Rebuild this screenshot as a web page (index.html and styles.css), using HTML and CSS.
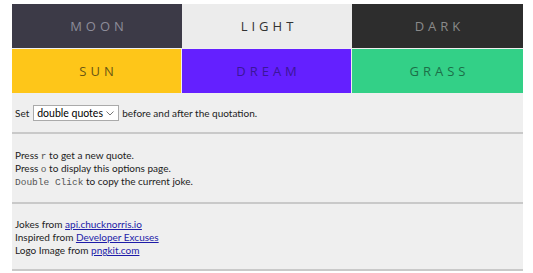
FILE: index.html
```html
<!DOCTYPE html>
<html lang="en">
<head>
  <meta charset="UTF-8" />
  <title>Options</title>
  <link rel="stylesheet" href="styles.css">
</head>
<body>
  <div class="options">
    <!-- theme tiles -->
    <div class="themes">
      <div class="theme moon">MOON</div>
      <div class="theme light">LIGHT</div>
      <div class="theme dark">DARK</div>
      <div class="theme sun">SUN</div>
      <div class="theme dream">DREAM</div>
      <div class="theme grass">GRASS</div>
    </div>

    <div class="section quotes">
      Set
      <span class="select-wrap">
        <select class="quote-select">
          <option>double quotes</option>
          <option>single quotes</option>
          <option>none</option>
        </select>
        <svg class="chevron" width="8" height="5" viewBox="0 0 8 5">
          <path d="M0.5 0.5 L4 4 L7.5 0.5" fill="none" stroke="#666" stroke-width="0.9"/>
        </svg>
      </span>
      before and after the quotation.
    </div>

    <div class="section keys">
      <p>Press <code>r</code> to get a new quote.</p>
      <p>Press <code>o</code> to display this options page.</p>
      <p><code>Double Click</code> to copy the current joke.</p>
    </div>

    <div class="section credits">
      <p>Jokes from <a href="#">api.chucknorris.io</a></p>
      <p>Inspired from <a href="#">Developer Excuses</a></p>
      <p>Logo Image from <a href="#">pngkit.com</a></p>
    </div>
  </div>
</body>
</html>
```
FILE: styles.css
```css
* {
  margin: 0;
  padding: 0;
  box-sizing: border-box;
}

body {
  background: #fff;
  font-family: Lato, "Open Sans", sans-serif;
  font-size: 10px;
  color: #222;
}

.options {
  width: 511px;
  margin: 4px 0 0 12px;
  background: #efefef;
}

/* tiles */
.themes {
  display: grid;
  grid-template-columns: 170px 170px 171px;
  grid-auto-rows: 44px;
  row-gap: 1px;
}

.theme {
  display: flex;
  justify-content: center;
  align-items: center;
  font-family: "Open Sans", sans-serif;
  font-size: 13px;
  letter-spacing: 4px;
  padding-left: 4px;
}

.moon  { background: #3c3a47; color: #8d8c99; }
.light { background: #ececec; color: #333; }
.dark  { background: #2d2d2d; color: #8a8a8a; }
.sun   { background: #fec619; color: #6a5614; margin-right: 1px; }
.dream { background: #6420ff; color: #3b1699; margin-right: 1px; }
.grass { background: #33d087; color: #1c6e48; }

/* sections */
.section {
  border-bottom: 2px solid #c9c9c9;
  padding-left: 3px;
}

.section p {
  height: 13px;
  line-height: 13px;
}

.quotes {
  height: 41px;
  display: flex;
  align-items: center;
  gap: 3px;
}

.select-wrap {
  position: relative;
  display: inline-block;
  margin-left: 1px;
}

.quote-select {
  appearance: none;
  display: block;
  font-family: Lato, sans-serif;
  font-size: 10.5px;
  width: 86px;
  height: 16px;
  line-height: 14px;
  padding: 0 0 0 3px;
  border: 1px solid #aaa;
  border-radius: 0;
  background: #fff;
  color: #000;
}

.chevron {
  position: absolute;
  right: 5px;
  top: 6px;
  z-index: 1;
  pointer-events: none;
}

.keys {
  padding-top: 15px;
  padding-bottom: 14px;
}

.credits {
  padding-top: 14px;
  padding-bottom: 12px;
}

code {
  font-family: "Liberation Mono", "DejaVu Sans Mono", monospace;
  font-size: 9.5px;
  color: #555;
}

a {
  color: #1d1ba8;
}
```
